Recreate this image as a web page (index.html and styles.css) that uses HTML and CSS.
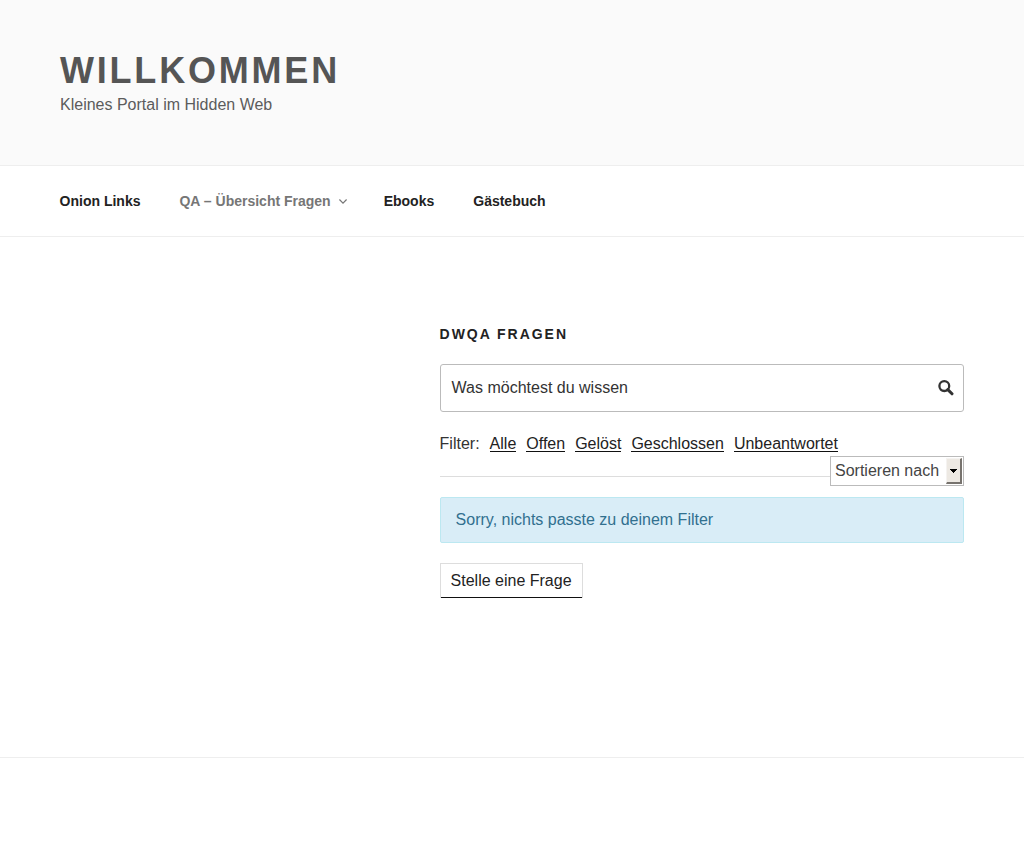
FILE: index.html
```
<!DOCTYPE html>
<html lang="de">
<head>
<meta charset="utf-8">
<title>Willkommen</title>
<link rel="stylesheet" href="styles.css">
</head>
<body>
<header class="site-header">
  <h1 class="site-title">WILLKOMMEN</h1>
  <p class="site-description">Kleines Portal im Hidden Web</p>
</header>
<nav class="navigation">
  <a class="nav-link nav-onion">Onion Links</a>
  <a class="nav-link nav-current">QA – Übersicht Fragen<svg class="chevron" width="8" height="5" viewBox="0 0 8 5"><path d="M.4 .5 4 4.1 7.6 .5" fill="none" stroke="currentColor" stroke-width="1.2"/></svg></a>
  <a class="nav-link nav-ebooks">Ebooks</a>
  <a class="nav-link">Gästebuch</a>
</nav>
<main class="content">
  <section class="questions">
    <h2 class="page-title">DWQA FRAGEN</h2>
    <div class="search">
      <span>Was möchtest du wissen</span>
      <svg class="search-icon" width="16" height="16" viewBox="0 0 16 16" fill="none" stroke="#333"><circle cx="6.3" cy="6.1" r="4.9" stroke-width="2.3"/><path d="M9.8 9.6 14 13.8" stroke-width="3" stroke-linecap="round"/></svg>
    </div>
    <div class="filter"><span>Filter:</span><a>Alle</a><a>Offen</a><a>Gelöst</a><a>Geschlossen</a><a>Unbeantwortet</a></div>
    <div class="sort-row">
      <div class="rule"></div>
      <div class="sort"><span>Sortieren nach</span><span class="sort-button"><svg width="7" height="4" viewBox="0 0 7 4" shape-rendering="crispEdges"><path d="M0 0H7V1H6V2H5V3H4V4H3V3H2V2H1V1H0Z"/></svg></span></div>
    </div>
    <div class="notice">Sorry, nichts passte zu deinem Filter</div>
    <a class="ask">Stelle eine Frage</a>
  </section>
</main>
<footer class="site-footer"></footer>
</body>
</html>
```
FILE: styles.css
```
* { box-sizing: border-box; }
body {
  margin: 0;
  min-height: 864px;
  background: #fff;
  color: #333;
  font: 16px/24px "Liberation Sans", Arial, sans-serif;
}
.site-header {
  height: 166px;
  padding: 48px 60px 0;
  background: #fafafa;
  border-bottom: 1px solid #eee;
}
.site-title {
  margin: 0;
  color: #555;
  font-size: 36px;
  line-height: 45px;
  letter-spacing: 2.8px;
}
.site-description { margin: 0; color: #5c5c5c; }
.navigation {
  display: flex;
  align-items: center;
  height: 71px;
  padding: 0 59.6px;
  border-bottom: 1px solid #eee;
}
.nav-link {
  margin-right: 39px;
  color: #222;
  font-size: 14px;
  font-weight: 700;
}
.nav-current { margin-right: 37px; color: #767676; }
.chevron { margin-left: 8px; vertical-align: 2px; }
.content { height: 520px; padding: 87px 60px 0 439.6px; }
.page-title {
  margin: 0 0 30px;
  color: #222;
  font-size: 14px;
  line-height: 20px;
  letter-spacing: 1.96px;
}
.search {
  display: flex;
  align-items: center;
  justify-content: space-between;
  height: 48px;
  margin-top: -10px;
  padding: 0 9px 0 11px;
  border: 1px solid #bbb;
  border-radius: 3px;
}
.filter { display: flex; gap: 10px; height: 24px; margin-top: 20px; }
.filter a { height: 20px; color: #222; border-bottom: 1px solid #111; }
.sort-row { display: flex; height: 30px; }
.rule { flex: 1; height: 21px; border-bottom: 1px solid #ddd; }
.sort {
  display: flex;
  justify-content: space-between;
  width: 134px;
  padding: 1px 1px 1px 4px;
  border: 1px solid #bbb;
  color: #444;
  line-height: 25px;
}
.sort-button {
  display: flex;
  align-items: center;
  justify-content: center;
  width: 16px;
  border: 1px solid #f5f3f1;
  border-right: 2px solid #77736e;
  border-bottom: 2px solid #77736e;
  background: #ede9e3;
}
.notice {
  height: 46px;
  margin-top: 11px;
  padding: 10px 15px;
  border: 1px solid #bce8f1;
  border-radius: 2px;
  background: #d9edf7;
  color: #31708f;
}
.ask {
  display: block;
  width: 143px;
  height: 35px;
  margin-top: 20px;
  padding-left: 10px;
  border: 1px solid #ddd;
  box-shadow: inset 0 -1px 0 #111;
  border-bottom-width: 0;
  color: #222;
  line-height: 33px;
}
.site-footer { border-top: 1px solid #eee; }
```
